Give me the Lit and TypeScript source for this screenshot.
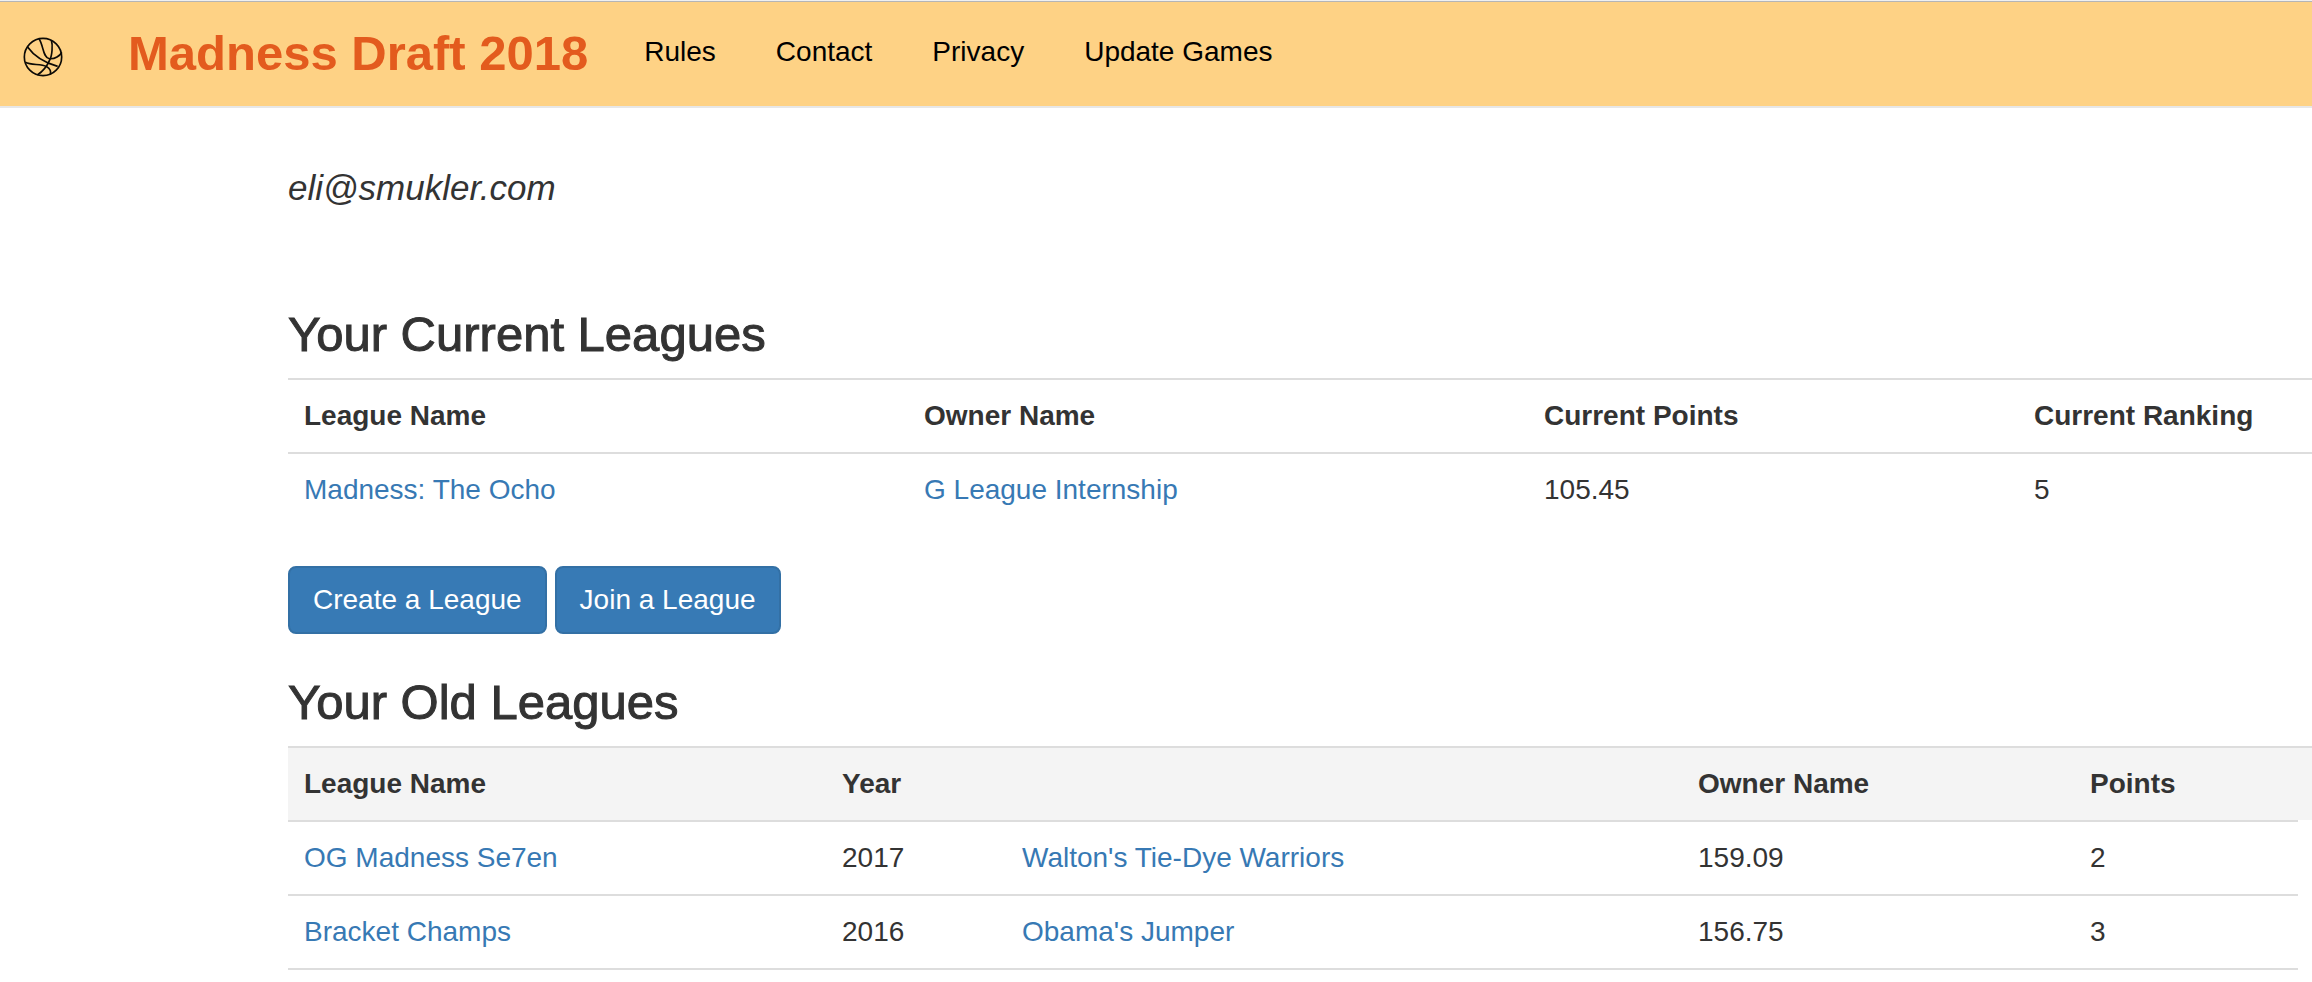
import { LitElement, html, css } from "lit";
import { customElement, property } from "lit/decorators.js";

@customElement("site-nav")
class SiteNav extends LitElement {
  static styles = css`
    :host { display: block; }
    .bar {
      display: flex;
      align-items: flex-start;
      box-sizing: border-box;
      padding: 30px 22px 28px;
      border-bottom: 2px solid #e7e7e7;
      background: #fed285;
    }
    .window-edge { height: 1px; background: #f0f0f0; border-bottom: 1px solid #b5b5b5; }
    .logo { display: block; margin-top: 4px; line-height: 0; }
    .logo svg { display: block; width: 42px; height: 42px; }
    .brand {
      margin-left: 64px;
      font-size: 49px;
      line-height: 42px;
      font-weight: 700;
      color: #e35b1e;
      text-decoration: none;
      white-space: nowrap;
    }
    .links { display: flex; gap: 60px; margin: 0 0 0 56px; padding: 0; list-style: none; }
    .links a { color: #000; font-size: 28px; line-height: 40px; text-decoration: none; white-space: nowrap; }
  `;

  render() {
    return html`
      <div class="window-edge"></div>
      <nav class="bar">
        <a class="logo" href="#" aria-label="Home">
          <svg viewBox="0 0 126 126" fill="none" stroke="#0c0a06" stroke-width="5">
            <circle cx="63" cy="63" r="56" />
            <path d="M16 32C34 57 64 79 107 91" />
            <path d="M10 79C29 89 56 82 74 92C82 97 88 105 85 115" />
            <path d="M51 8C65 28 62 65 82 68C99 70 114 59 119 49" />
            <path d="M88 12C93 28 90 59 84 70C76 89 64 105 46 117" />
          </svg>
        </a>
        <a class="brand" href="#">Madness Draft 2018</a>
        <ul class="links">
          ${["Rules", "Contact", "Privacy", "Update Games"].map((t) => html`<li><a href="#">${t}</a></li>`)}
        </ul>
      </nav>
    `;
  }
}

type Cell = { text: string; link?: boolean };

@customElement("league-table")
class LeagueTable extends LitElement {
  @property({ attribute: false }) heads: string[] = [];
  @property({ attribute: false }) rows: Cell[][] = [];
  @property() kind = "current";

  static styles = css`
    :host { display: block; }
    .table { width: 100%; table-layout: fixed; border-collapse: separate; border-spacing: 0; }
    .table th, .table td {
      box-sizing: border-box;
      padding: 16px;
      border-top: 2px solid #dddddd;
      font-size: 28px;
      line-height: 40px;
      text-align: left;
      white-space: nowrap;
    }
    .table a { color: #3779b4; text-decoration: none; }
    .old th { background: #f4f4f4; }
    .old .edge { padding: 0; }
    .old td.edge { border-top-color: transparent; }
    .old tbody tr:last-child td:not(.edge) { border-bottom: 2px solid #dddddd; }
    .current .c0, .current .c1 { width: 620px; }
    .current .c3 { width: 294px; }
    .old .c0 { width: 538px; }
    .old .c1 { width: 180px; }
    .old .c3 { width: 392px; }
    .old .c4 { width: 224px; }
    .old .c5 { width: 14px; }
  `;

  render() {
    return html`
      <table class="table ${this.kind}">
        <colgroup>${this.heads.map((_, i) => html`<col class="c${i}" />`)}</colgroup>
        <thead>
          <tr>${this.heads.map((h, i) => html`<th scope="col" class=${i === 5 ? "edge" : ""}>${h}</th>`)}</tr>
        </thead>
        <tbody>
          ${this.rows.map((r) => html`<tr>${r.map((c, i) => html`<td class=${i === 5 ? "edge" : ""}>${c.link ? html`<a href="#">${c.text}</a>` : c.text}</td>`)}</tr>`)}
        </tbody>
      </table>
    `;
  }
}

@customElement("app-root")
class AppRoot extends LitElement {
  static styles = css`
    :host {
      display: block;
      background: #fff;
      color: #333;
      font-family: "Helvetica Neue", "Liberation Sans", Helvetica, Arial, sans-serif;
    }
    .content { padding: 60px 0 0 288px; }
    .email { margin: 0 0 100px; font-size: 35px; line-height: 40px; font-style: italic; }
    .title {
      margin: 0 0 18px;
      font-size: 49px;
      line-height: 52px;
      font-weight: 500;
      -webkit-text-stroke: 1px #333;
    }
    .actions { display: flex; gap: 8px; margin: 40px 0 42px; }
    .btn {
      padding: 12px 23px;
      border: 2px solid #3370a5;
      border-radius: 8px;
      background: #377ab5;
      color: #fff;
      font-family: inherit;
      font-size: 28px;
      line-height: 40px;
    }
  `;

  render() {
    return html`
      <site-nav></site-nav>
      <main class="content">
        <p class="email">eli@smukler.com</p>
        <h3 class="title">Your Current Leagues</h3>
        <league-table
          kind="current"
          .heads=${["League Name", "Owner Name", "Current Points", "Current Ranking"]}
          .rows=${[[{ text: "Madness: The Ocho", link: true }, { text: "G League Internship", link: true }, { text: "105.45" }, { text: "5" }]]}
        ></league-table>
        <div class="actions">
          <button class="btn" type="button">Create a League</button>
          <button class="btn" type="button">Join a League</button>
        </div>
        <h3 class="title">Your Old Leagues</h3>
        <league-table
          kind="old"
          .heads=${["League Name", "Year", "", "Owner Name", "Points", ""]}
          .rows=${[
            [{ text: "OG Madness Se7en", link: true }, { text: "2017" }, { text: "Walton's Tie-Dye Warriors", link: true }, { text: "159.09" }, { text: "2" }, { text: "" }],
            [{ text: "Bracket Champs", link: true }, { text: "2016" }, { text: "Obama's Jumper", link: true }, { text: "156.75" }, { text: "3" }, { text: "" }],
          ]}
        ></league-table>
      </main>
    `;
  }
}
